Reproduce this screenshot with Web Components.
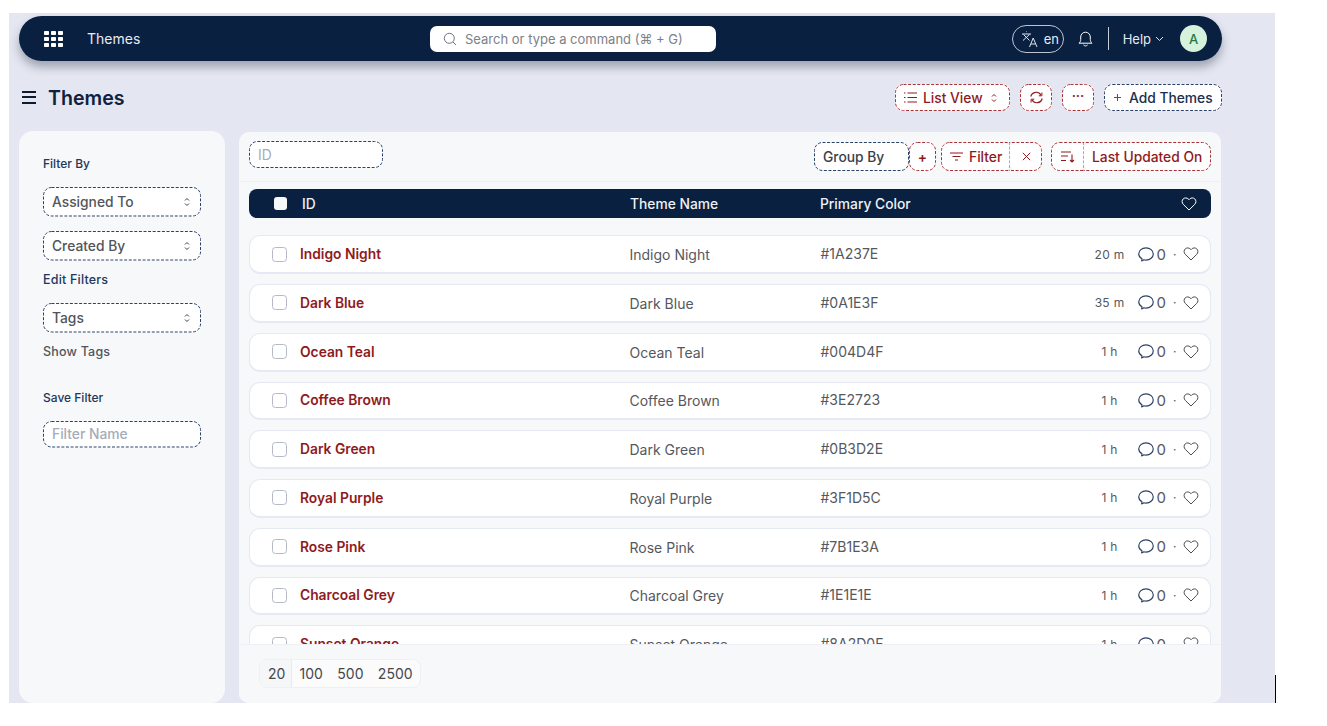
<!DOCTYPE html>
<html>
<head>
<meta charset="utf-8">
<title>Themes</title>
<style>
  html, body { margin: 0; padding: 0; background: #fff; height: 726px; overflow: hidden; }
  body { font-family: Inter, "Liberation Sans", sans-serif; font-size: 14px; }
  #cursor-line { position: absolute; left: 1275px; top: 675px; width: 1px; height: 28px; background: #000; }
</style>
</head>
<body>
<theme-app></theme-app>
<div id="cursor-line"></div>

<script>
const ICONS = {
  grid: `<svg width="19" height="16" viewBox="0 0 19 16" fill="#fff"><rect x="0" y="0" width="5" height="4" rx=".8"/><rect x="7" y="0" width="5" height="4" rx=".8"/><rect x="14" y="0" width="5" height="4" rx=".8"/><rect x="0" y="6" width="5" height="4" rx=".8"/><rect x="7" y="6" width="5" height="4" rx=".8"/><rect x="14" y="6" width="5" height="4" rx=".8"/><rect x="0" y="12" width="5" height="4" rx=".8"/><rect x="7" y="12" width="5" height="4" rx=".8"/><rect x="14" y="12" width="5" height="4" rx=".8"/></svg>`,
  search: `<svg width="14" height="14" viewBox="0 0 14 14" fill="none" stroke="#6b7280" stroke-width="1"><circle cx="6.3" cy="6.3" r="5"/><path d="M10 10l3 3"/></svg>`,
  translate: `<svg width="18" height="20" viewBox="0 0 18 20" fill="none" stroke="#dfe4ee" stroke-width="1"><path d="M1 5h9M5.500 2.500v.6M2.500 5.500l6 6M8.500 5.500l-6.500 6"/><path d="M8.500 18l3.700-9 3.800 9M10 15h4.500"/></svg>`,
  bell: `<svg width="15" height="17" viewBox="0 0 15 17" fill="none" stroke="#fff" stroke-width="1" stroke-linejoin="round"><path d="M1 13.200c1.100-1 1.700-2 1.700-3.700V7a4.800 4.800 0 0 1 9.600 0v2.500c0 1.700.6 2.700 1.700 3.700z"/><path d="M5.700 15.200c.9 1 2.700 1 3.600 0" stroke-linecap="round"/></svg>`,
  chevron: `<svg width="9" height="6" viewBox="0 0 9 6" fill="none" stroke="#dfe4ee" stroke-width="1"><path d="M1 1l3.500 3.500L8 1"/></svg>`,
  updown: (c) => `<svg width="6" height="10" viewBox="0 0 6 10" fill="none" stroke="${c}" stroke-width="1"><path d="M1 3.500L3 1.500l2 2M1 6.500l2 2 2-2"/></svg>`,
  list: `<svg width="13" height="11" viewBox="0 0 13 11" fill="none" stroke="#8f1a1d" stroke-width="1"><path d="M3.500 1H13M3.500 5.500H13M3.500 10H13M0 1h1.500M0 5.500h1.500M0 10h1.500"/></svg>`,
  refresh: `<svg width="15" height="13" viewBox="0 0 15 13" fill="none" stroke="#8f1a1d" stroke-width="1.200"><path d="M1.800 5.500A5.500 5.500 0 0 1 12 4.200M13.200 7.500A5.500 5.500 0 0 1 3 8.800"/><path d="M12.900 1.500v3.300H9.700M2.100 11.500V8.200h3.200" stroke-width="1"/></svg>`,
  plus: (c) => `<svg width="9" height="9" viewBox="0 0 9 9" fill="none" stroke="${c}" stroke-width="1"><path d="M4.500 1v7M1 4.500h7"/></svg>`,
  filter: `<svg width="13" height="9" viewBox="0 0 13 9" fill="none" stroke="#8f1a1d" stroke-width="1"><path d="M0 1h13M2.500 4.500h8M5 8h3"/></svg>`,
  close: `<svg width="9" height="9" viewBox="0 0 9 9" fill="none" stroke="#8f1a1d" stroke-width="1"><path d="M.8.800l7.400 7.400M8.200.800L.8 8.200"/></svg>`,
  sort: `<svg width="14" height="12" viewBox="0 0 14 12" fill="none" stroke="#8f1a1d" stroke-width="1.100"><path d="M0 1h10M0 5h7M0 9.500h5M11 3.500v7.500M9 9l2 2 2-2"/></svg>`,
  heart: (c, w = 16) => `<svg width="${w}" height="${w - 2}" viewBox="0 0 15 14" fill="none" stroke="${c}" stroke-width="1" stroke-linejoin="round"><path d="M7.500 13L1.800 7.400C.2 5.800.2 3.300 1.800 1.800c1.500-1.300 3.700-1.100 5 .2l.7.700.7-.7c1.300-1.300 3.500-1.500 5-.2 1.600 1.500 1.600 4 0 5.600z"/></svg>`,
  comment: `<svg width="16" height="15" viewBox="0 0 15 14" fill="none" stroke="#2c4066" stroke-width="1.100" stroke-linejoin="round"><path d="M3.700 11C1.900 10 .7 8.400 .7 6.500.7 3.300 3.700.8 7.500.8s6.800 2.500 6.800 5.700-3 5.700-6.800 5.700c-.7 0-1.400-.1-2-.3-.6.500-1.200.9-2.100 1 .2-.5.3-1.100.3-1.900z"/></svg>`
};

// the tight dashes of the reference can't be had from a css border
const DASH_CSS = `
  svg.dash { position: absolute; left: 0; top: 0; width: 100%; height: 100%; overflow: hidden; pointer-events: none; }
  svg.dash rect { x: .5px; y: .5px; width: calc(100% - 1px); height: calc(100% - 1px); rx: 8px; fill: none; stroke: var(--dash, #2c4169); stroke-dasharray: 3 1.600; }
  svg.dash line { display: none; stroke: var(--dash, #2c4169); stroke-dasharray: 3 1.600; }
  :host([join="left"]) svg.dash rect { width: calc(100% + 20px); }
  :host([join="left"]) svg.dash line { display: inline; }
  :host([join="right"]) svg.dash rect { x: -20px; width: calc(100% + 19.5px); }
`;
const DASH_SVG = `<svg class="dash"><rect></rect><line x1="100%" x2="100%" y1="0" y2="100%"></line></svg>`;

class DashBox extends HTMLElement {
  constructor() {
    super();
    this.attachShadow({mode: "open"}).innerHTML = `
    <style>
      :host {
        position: relative;
        display: inline-flex;
        align-items: center;
        box-sizing: border-box;
        height: 27px;
        gap: 6px;
        padding: 0 9px;
        background: #fff;
        border-radius: 8px;
        font-size: 13.800px;
        font-weight: 500;
        color: #1c2d4e;
        white-space: nowrap;
      }
      :host([tone="red"]) { --dash: #a6333a; color: #8f1a1d; }
      ${DASH_CSS}
    </style>
    ${DASH_SVG}<slot></slot>`;
  }
}
customElements.define("dash-box", DashBox);

class SelectBox extends HTMLElement {
  constructor() {
    super();
    const ph = this.hasAttribute("placeholder");
    this.attachShadow({mode: "open"}).innerHTML = `
    <style>
      :host {
        position: relative;
        display: flex;
        align-items: center;
        justify-content: space-between;
        box-sizing: border-box;
        width: 158px;
        height: 29.500px;
        padding: 0 11px 0 9px;
        background: #fff;
        border-radius: 8px;
        font-size: 13.800px;
        color: #52555b;
      }
      :host([placeholder]) { height: 26.500px; color: #a6acb8; }
      ${DASH_CSS}
    </style>
    ${DASH_SVG}<slot></slot>${ph ? "" : ICONS.updown("#3a3f4a")}`;
  }
}
customElements.define("select-box", SelectBox);

class AppNavbar extends HTMLElement {
  constructor() {
    super();
    this.attachShadow({mode: "open"}).innerHTML = `
    <style>
      :host {
        display: flex;
        align-items: center;
        flex: none;
        box-sizing: border-box;
        width: 1203px;
        height: 45px;
        margin: 3px 0 0 10px;
        padding: 0 15px 0 25px;
        background: #0a2040;
        border-radius: 23px;
        box-shadow: 0 6px 10px rgba(30, 38, 60, .35);
        color: #e6eaf2;
        font-size: 14px;
      }
      .title { margin-left: 24px; width: 343px; }
      .search {
        display: flex; align-items: center; gap: 8px;
        box-sizing: border-box;
        width: 286px; height: 26px;
        padding: 0 13px;
        background: #fff; border-radius: 7px;
        color: #7d8087; font-size: 13px; white-space: nowrap;
      }
      .right { margin-left: auto; display: flex; align-items: center; }
      .lang {
        display: flex; align-items: center; gap: 5px;
        box-sizing: border-box;
        width: 52px; height: 28px; padding: 0 0 0 8px;
        border: 1px solid #bcc4d2; border-radius: 15px;
        font-size: 13px;
      }
      .bell { display: flex; margin-left: 14px; }
      .sep { width: 1px; height: 23px; background: #c7ccd6; margin: 0 14px 0 15px; }
      .help { display: flex; align-items: center; gap: 4px; font-size: 13px; }
      .avatar {
        width: 27px; height: 27px; margin-left: 16px;
        display: flex; align-items: center; justify-content: center;
        border-radius: 50%;
        background: #d6f2dd; color: #1f7a45;
        font-size: 13px; font-weight: 500;
      }
    </style>
    ${ICONS.grid}
    <div class="title">Themes</div>
    <div class="search">${ICONS.search}<span>Search or type a command (⌘ + G)</span></div>
    <div class="right">
      <div class="lang">${ICONS.translate}<span>en</span></div>
      <div class="bell">${ICONS.bell}</div>
      <div class="sep"></div>
      <div class="help">Help ${ICONS.chevron}</div>
      <div class="avatar">A</div>
    </div>`;
  }
}
customElements.define("app-navbar", AppNavbar);

class PageHead extends HTMLElement {
  constructor() {
    super();
    this.attachShadow({mode: "open"}).innerHTML = `
    <style>
      :host {
        display: flex;
        align-items: center;
        flex: none;
        box-sizing: border-box;
        width: 1203px;
        height: 27px;
        margin: 23px 0 0 10px;
      }
      .burger { width: 14px; height: 13px; margin: 0 12px 0 3px;
        border-top: 2px solid #0f1a2e; border-bottom: 2px solid #0f1a2e; box-sizing: border-box; position: relative; }
      .burger::before { content: ""; position: absolute; left: 0; right: 0; top: 2.500px; height: 2px; background: #0f1a2e; }
      h1 { margin: 0; font-size: 19.600px; font-weight: 600; color: #0e2140; }
      .actions { margin-left: auto; display: flex; gap: 10px; }
      .square { padding: 0; width: 32px; justify-content: center; }
      .view { width: 115px; }
      .more { width: 118px; gap: 7px; }
      .dots { font-size: 14px; line-height: 1; position: relative; top: -2px; }
    </style>
    <div class="burger"></div>
    <h1>Themes</h1>
    <div class="actions">
      <dash-box tone="red" class="view">${ICONS.list}List View <span style="display:inline-flex;margin-left:2px">${ICONS.updown("#8f1a1d")}</span></dash-box>
      <dash-box tone="red" class="square">${ICONS.refresh}</dash-box>
      <dash-box tone="red" class="square"><span class="dots">···</span></dash-box>
      <dash-box class="more">${ICONS.plus("#4a5568")}<span>Add Themes</span></dash-box>
    </div>`;
  }
}
customElements.define("page-head", PageHead);

class FilterSidebar extends HTMLElement {
  constructor() {
    super();
    this.attachShadow({mode: "open"}).innerHTML = `
    <style>
      :host {
        display: block;
        box-sizing: border-box;
        width: 206px;
        flex: none;
        margin-top: -1px;
        padding: 25px 24px 0;
        background: #f7f8fa;
        border-radius: 14px;
        font-size: 12px;
        font-weight: 500;
        color: #22375c;
      }
      .label { line-height: 15px; }
      .first { margin-top: 16px; }
      .second { margin-top: 14.500px; }
      .edit { margin-top: 11px; font-size: 12.500px; letter-spacing: .2px; line-height: 15px; }
      .tags { margin-top: 16.500px; }
      .show { margin-top: 11px; line-height: 15px; color: #52555b; font-size: 12.500px; letter-spacing: .2px; }
      .save { margin-top: 31px; }
      .name { margin-top: 16.500px; }
    </style>
    <div class="label">Filter By</div>
    <select-box class="first">Assigned To</select-box>
    <select-box class="second">Created By</select-box>
    <div class="edit">Edit Filters</div>
    <select-box class="tags">Tags</select-box>
    <div class="show">Show Tags</div>
    <div class="label save">Save Filter</div>
    <select-box class="name" placeholder>Filter Name</select-box>`;
  }
}
customElements.define("filter-sidebar", FilterSidebar);

class ListToolbar extends HTMLElement {
  constructor() {
    super();
    this.attachShadow({mode: "open"}).innerHTML = `
    <style>
      :host {
        display: flex;
        align-items: center;
        flex: none;
        box-sizing: border-box;
        height: 50px;
        padding: 0 10px;
        border-bottom: 1px solid #eef0f5;
      }
      .id { width: 134px; height: 27px; margin-bottom: 4px; color: #a6acb8; font-weight: 400; }
      dash-box { height: 29px; }
      .right { margin-left: auto; display: flex; align-items: center; }
      .group { width: 95px; color: #3a3f4a; }
      .add { width: 27px; padding: 0; justify-content: center; font-weight: 600; }
      .filter { width: 69px; margin-left: 5px; padding: 0 0 0 9px; }
      .clear { width: 32px; padding: 0; justify-content: center; }
      .sort { width: 33px; margin-left: 9px; padding: 0; justify-content: center; }
      .order { width: 127px; padding: 0 0 0 8px; }
    </style>
    <dash-box class="id">ID</dash-box>
    <div class="right">
      <dash-box class="group">Group By</dash-box>
      <dash-box class="add" tone="red">+</dash-box>
      <dash-box class="filter" tone="red" join="left">${ICONS.filter}Filter</dash-box>
      <dash-box class="clear" tone="red" join="right">${ICONS.close}</dash-box>
      <dash-box class="sort" tone="red" join="left">${ICONS.sort}</dash-box>
      <dash-box class="order" tone="red" join="right">Last Updated On</dash-box>
    </div>`;
  }
}
customElements.define("list-toolbar", ListToolbar);

class ListHeader extends HTMLElement {
  constructor() {
    super();
    this.attachShadow({mode: "open"}).innerHTML = `
    <style>
      :host {
        display: flex;
        align-items: center;
        flex: none;
        box-sizing: border-box;
        height: 29px;
        margin: 7px 10px 0;
        padding: 0 14px 0 25px;
        background: #0a2040;
        border-radius: 8px;
        color: #eef1f6;
        font-size: 13.800px;
        font-weight: 500;
      }
      .box { width: 13px; height: 13px; margin-right: 15px; background: #f7f8fa; border-radius: 3px; flex: none; }
      .c-id { width: 328px; flex: none; }
      .c-name { width: 190px; flex: none; }
      .heart { margin-left: auto; display: flex; }
    </style>
    <div class="box"></div>
    <div class="c-id">ID</div>
    <div class="c-name">Theme Name</div>
    <div>Primary Color</div>
    <div class="heart">${ICONS.heart("#fff")}</div>`;
  }
}
customElements.define("list-header", ListHeader);

class ThemeRow extends HTMLElement {
  constructor() {
    super();
    this.attachShadow({mode: "open"}).innerHTML = `
    <style>
      :host {
        display: flex;
        align-items: center;
        flex: none;
        box-sizing: border-box;
        height: 38.750px;
        padding: 0 11px 0 22px;
        background: #fff;
        border: 1px solid #e4e9f4;
        border-bottom-width: 2px;
        border-radius: 11px;
        font-size: 14px;
        color: #55585e;
      }
      .box { width: 13px; height: 13px; margin-right: 13px; border: 1px solid #b4b9c4; border-radius: 3.500px; flex: none; }
      .c-id { width: 329.500px; flex: none; font-size: 13.800px; font-weight: 600; color: #8f1a1d; }
      .c-name { width: 191px; flex: none; position: relative; top: .5px; }
      .c-color { position: relative; top: -.5px; }
      .stats { margin-left: auto; display: flex; align-items: center; }
      .age { font-size: 12px; letter-spacing: .3px; width: 44px; text-align: center; margin-right: 6px; }
      .count { margin: 0 7px 0 3px; font-size: 15px; }
      .dot { margin-right: 6.500px; font-size: 12px; }
      svg { display: block; }
    </style>
    <div class="box"></div>
    <div class="c-id">${this.getAttribute("name")}</div>
    <div class="c-name">${this.getAttribute("name")}</div>
    <div class="c-color">${this.getAttribute("color")}</div>
    <div class="stats">
      <span class="age">${this.getAttribute("age")}</span>
      ${ICONS.comment}
      <span class="count">0</span>
      <span class="dot">·</span>
      ${ICONS.heart("#4a4d53")}
    </div>`;
  }
}
customElements.define("theme-row", ThemeRow);

class PageLengths extends HTMLElement {
  constructor() {
    super();
    this.attachShadow({mode: "open"}).innerHTML = `
    <style>
      :host {
        display: flex;
        align-items: center;
        flex: none;
        box-sizing: border-box;
        height: 59px;
        padding: 0 20px 1px;
        border-top: 1px solid #eef0f5;
        background: #f7f8fa;
        font-size: 14px;
        color: #44474d;
      }
      .group { display: flex; width: 162px; height: 29px; box-sizing: border-box; border: 1px solid #eef0f4; border-radius: 8px; background: #fbfbfc; overflow: hidden; }
      span { display: flex; align-items: center; padding: 0 8px; }
      .on { background: #f5f6f8; border-right: 1px solid #e8eaef; padding: 0 6px 0 8px; }
      .rest { padding: 0 7.200px; }
    </style>
    <div class="group">
      <span class="on">20</span>
      <span class="rest">100</span>
      <span class="rest">500</span>
      <span class="rest">2500</span>
    </div>`;
  }
}
customElements.define("page-lengths", PageLengths);

class ThemeList extends HTMLElement {
  constructor() {
    super();
    const themes = [
      ["Indigo Night", "#1A237E", "20 m"],
      ["Dark Blue", "#0A1E3F", "35 m"],
      ["Ocean Teal", "#004D4F", "1 h"],
      ["Coffee Brown", "#3E2723", "1 h"],
      ["Dark Green", "#0B3D2E", "1 h"],
      ["Royal Purple", "#3F1D5C", "1 h"],
      ["Rose Pink", "#7B1E3A", "1 h"],
      ["Charcoal Grey", "#1E1E1E", "1 h"],
      ["Sunset Orange", "#8A2D0F", "1 h"]
    ];
    const rows = themes.map(t => `<theme-row name="${t[0]}" color="${t[1]}" age="${t[2]}"></theme-row>`).join("");
    this.attachShadow({mode: "open"}).innerHTML = `
    <style>
      :host {
        display: flex;
        flex-direction: column;
        box-sizing: border-box;
        width: 982px;
        flex: none;
        background: #f7f8fa;
        border-radius: 10px;
        overflow: hidden;
      }
      .rows {
        flex: 1;
        min-height: 0;
        overflow: hidden;
        display: flex;
        flex-direction: column;
        gap: 10px;
        padding: 17.250px 10px 0;
      }
    </style>
    <list-toolbar></list-toolbar>
    <list-header></list-header>
    <div class="rows">${rows}</div>
    <page-lengths></page-lengths>`;
  }
}
customElements.define("theme-list", ThemeList);

class ThemeApp extends HTMLElement {
  constructor() {
    super();
    this.attachShadow({mode: "open"}).innerHTML = `
    <style>
      :host {
        display: flex;
        flex-direction: column;
        box-sizing: border-box;
        width: 1266px;
        height: 690px;
        margin: 13px 0 0 9px;
        background: #e4e7f1;
        overflow: hidden;
      }
      .body {
        flex: 1;
        min-height: 0;
        display: flex;
        gap: 14px;
        margin: 21px 0 0 10px;
      }
    </style>
    <app-navbar></app-navbar>
    <page-head></page-head>
    <div class="body">
      <filter-sidebar></filter-sidebar>
      <theme-list></theme-list>
    </div>`;
  }
}
customElements.define("theme-app", ThemeApp);
</script>
</body>
</html>
